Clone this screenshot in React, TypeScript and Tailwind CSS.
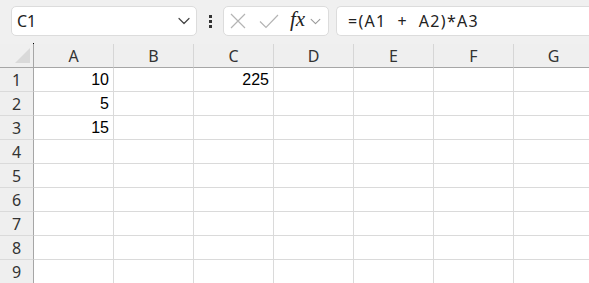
const cols = ['A', 'B', 'C', 'D', 'E', 'F', 'G'];
const rows = [1, 2, 3, 4, 5, 6, 7, 8, 9];

const data: Record<string, string> = {
  A1: '10',
  A2: '5',
  A3: '15',
  C1: '225',
};

function Chevron({ className }: { className?: string }) {
  return (
    <svg className={className} viewBox="0 0 12 8" fill="none">
      <path d="M1 1.5l5 5 5-5" stroke="currentColor" strokeWidth="1.2" strokeLinecap="round" strokeLinejoin="round" />
    </svg>
  );
}

export default function App() {
  return (
    <div className="w-[589px] h-[283px] overflow-hidden bg-white font-['Noto_Sans',sans-serif]">
      {/* Toolbar */}
      <div className="h-[44px] bg-[#f0f0f0] flex items-start pt-[6px]">
        <div className="ml-[11px] w-[186px] h-[30px] bg-white border border-[#dcdcdc] rounded-[5px] flex items-center justify-between pl-[5px] pr-[6px]">
          <span className="text-[16px] text-[#222]">C1</span>
          <Chevron className="w-[12px] h-[8px] text-[#444]" />
        </div>
        <div className="w-[26px] h-[30px] flex flex-col items-center justify-center gap-[2px]">
          <span className="w-[3px] h-[3px] bg-[#333]" />
          <span className="w-[3px] h-[3px] bg-[#333]" />
          <span className="w-[3px] h-[3px] bg-[#333]" />
        </div>
        <div className="w-[106px] h-[30px] bg-white border border-[#dcdcdc] rounded-[5px] flex items-center pl-[5px]">
          <svg className="w-[18px] h-[18px]" viewBox="0 0 18 18" fill="none">
            <path d="M2 2l14 14M16 2L2 16" stroke="#b4b4b4" strokeWidth="1.2" />
          </svg>
          <svg className="w-[20px] h-[18px] ml-[12px]" viewBox="0 0 20 18" fill="none">
            <path d="M1 9.5l6 6L19 3" stroke="#b4b4b4" strokeWidth="1.2" />
          </svg>
          <span className="ml-[11px] font-['Liberation_Serif',serif] italic text-[21px] leading-none text-[#222] -mt-[3px]">fx</span>
          <Chevron className="w-[11px] h-[7px] ml-[5px] text-[#999]" />
        </div>
        <div className="ml-[7px] flex-1 h-[30px] bg-white border border-r-0 border-[#dcdcdc] rounded-l-[5px] flex items-center pl-[11px]">
          <span className="text-[16px] tracking-[1.3px] text-[#222] whitespace-pre">=(A1  +  A2)*A3</span>
        </div>
      </div>

      {/* Sheet */}
      <div className="grid grid-cols-[34px_repeat(7,80px)] auto-rows-[24px]">
        <div className="relative bg-[#efefef] border-r border-b border-[#a6a6a6]">
          <span className="absolute right-[-1px] top-[-1px] w-[1px] h-[1px] bg-black" />
          <svg className="absolute left-[15px] top-[4px] w-[15px] h-[15px]" viewBox="0 0 15 15">
            <path d="M15 0V15H0Z" fill="#d9d9d9" />
          </svg>
        </div>
        {cols.map((c) => (
          <div
            key={c}
            className="bg-[#efefef] border-r border-r-[#d6d6d6] border-b border-b-[#a6a6a6] flex items-center justify-center text-[16px] text-[#333]"
          >
            {c}
          </div>
        ))}
        {rows.map((r) => (
          <div key={r} className="contents">
            <div className="bg-[#efefef] border-r border-r-[#a6a6a6] border-b border-b-[#dadada] flex items-center justify-center text-[16px] text-[#333]">
              {r}
            </div>
            {cols.map((c) => (
              <div
                key={c}
                className="border-r border-b border-[#dadada] flex items-center justify-end pr-[4px] font-['Liberation_Sans',sans-serif] text-[16px] text-black"
              >
                {data[c + r] ?? ''}
              </div>
            ))}
          </div>
        ))}
      </div>
    </div>
  );
}
